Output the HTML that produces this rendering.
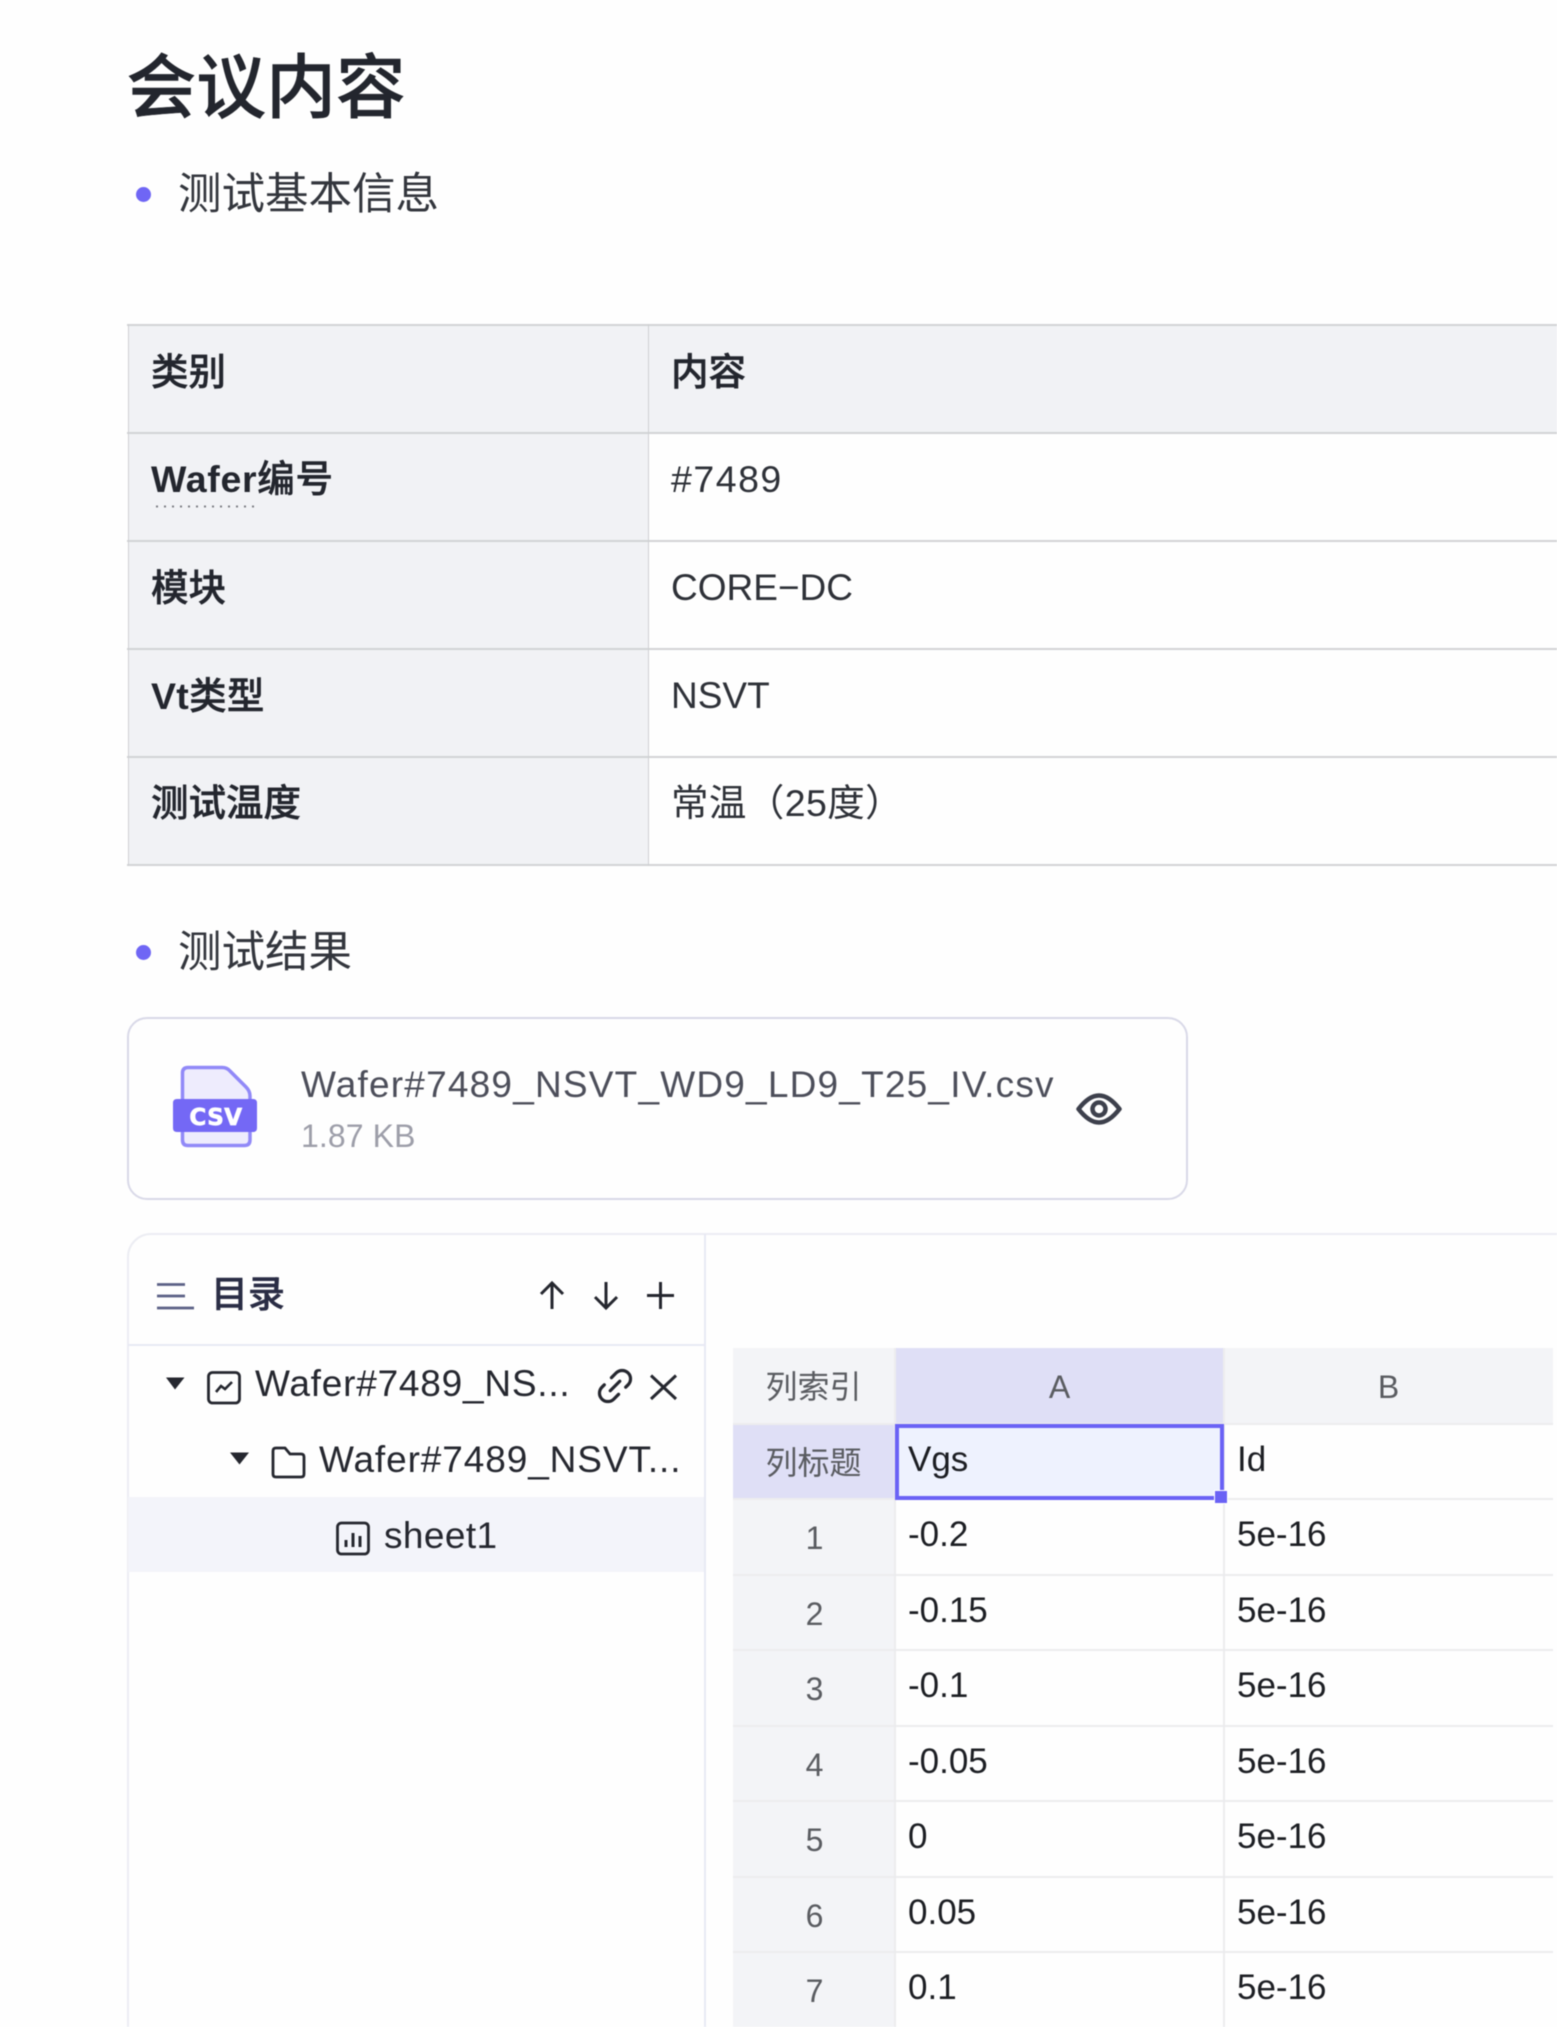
<!DOCTYPE html>
<html lang="zh"><head><meta charset="utf-8"><title>会议内容</title>
<style>
html,body{margin:0;padding:0;background:#fefefe}
#p{position:relative;width:1557px;height:2027px;overflow:hidden;background:#fefefe;font-family:"Liberation Sans","Noto Sans CJK SC",sans-serif;color:#23262e;filter:blur(.4px)}
.t{position:absolute;white-space:nowrap;line-height:50px;height:50px}
.b{font-weight:500;-webkit-text-stroke:.45px currentColor}
.l{font-weight:700;-webkit-text-stroke:0}
.r{position:absolute}
.cell{font-size:35px;color:#1c1e23}
.idx{font-size:32px;color:#5a5c61;text-align:center}
svg{position:absolute;overflow:visible}
</style></head><body><div id="p">

<div class="t" style="left:126.500px;top:53px;font-size:69.800px;line-height:70px;height:70px;font-weight:500;-webkit-text-stroke:.5px currentColor">会议内容</div>

<div class="r" style="left:136px;top:187px;width:15px;height:15px;border-radius:50%;background:#6f66f5"></div>
<div class="t" style="left:178px;top:170px;font-size:43.500px;color:#33363d">测试基本信息</div>

<!-- table -->
<div class="r" style="left:128px;top:324px;width:520px;height:541px;background:#f1f2f5"></div>
<div class="r" style="left:648px;top:324px;width:909px;height:108px;background:#f1f2f5"></div>
<div class="r" style="left:127px;top:324px;width:1430px;height:2px;background:#d2d3d5"></div>
<div class="r" style="left:127px;top:432px;width:1430px;height:2px;background:#d2d3d5"></div>
<div class="r" style="left:127px;top:540px;width:1430px;height:2px;background:#d2d3d5"></div>
<div class="r" style="left:127px;top:648px;width:1430px;height:2px;background:#d2d3d5"></div>
<div class="r" style="left:127px;top:756px;width:1430px;height:2px;background:#d2d3d5"></div>
<div class="r" style="left:127px;top:864px;width:1430px;height:2px;background:#d2d3d5"></div>
<div class="r" style="left:127.500px;top:324px;width:1.500px;height:542px;background:#cfd0d3"></div>
<div class="r" style="left:647.500px;top:324px;width:1.500px;height:542px;background:#cfd0d3"></div>

<div class="t b" style="left:151px;top:347px;font-size:37.500px">类别</div>
<div class="t b" style="left:671px;top:347px;font-size:37.500px">内容</div>
<div class="t b" style="left:151px;top:454px;font-size:37.500px;letter-spacing:.7px"><span class="l">Wafer</span>编号</div>
<svg style="left:0;top:0" width="1557" height="2027"><line x1="156" y1="506.500" x2="255" y2="506.500" stroke="#7d7f84" stroke-width="2" stroke-dasharray="2 6"/></svg>
<div class="t" style="left:671px;top:453.500px;font-size:37.500px;letter-spacing:1.500px;color:#2e3138">#7489</div>
<div class="t b" style="left:151px;top:562.500px;font-size:37.500px">模块</div>
<div class="t" style="left:671px;top:562.500px;font-size:37px;letter-spacing:0;color:#2e3138">CORE−DC</div>
<div class="t b" style="left:151px;top:670.500px;font-size:37.500px;letter-spacing:.3px"><span class="l">Vt</span>类型</div>
<div class="t" style="left:671px;top:670.500px;font-size:37px;letter-spacing:0;color:#2e3138">NSVT</div>
<div class="t b" style="left:151px;top:778px;font-size:37.500px">测试温度</div>
<div class="t" style="left:671px;top:778px;font-size:37.500px;letter-spacing:.4px;color:#2e3138">常温（25度）</div>

<div class="r" style="left:136px;top:945px;width:15px;height:15px;border-radius:50%;background:#6f66f5"></div>
<div class="t" style="left:178px;top:928px;font-size:43.500px;color:#33363d">测试结果</div>

<!-- file card -->
<div class="r" style="left:127px;top:1017px;width:1061px;height:183px;box-sizing:border-box;border:2.500px solid #d9d9e8;border-radius:20px"></div>
<svg style="left:0;top:0" width="1557" height="2027">
  <path d="M188 1067.500 H222 Q227 1067.500 230 1071 L246 1087 Q250 1091 250 1096 V1140 Q250 1145.500 244 1145.500 H188 Q182.500 1145.500 182.500 1140 V1073 Q182.500 1067.500 188 1067.500 Z" fill="#eeecfd" stroke="#9189f8" stroke-width="3.500"/>
  <path d="M177 1099 H253 Q257 1099 257 1103 V1128 Q257 1132 253 1132 H177 Q173 1132 173 1128 V1103 Q173 1099 177 1099 Z" fill="#7468f5"/>
  <text x="216" y="1125" text-anchor="middle" font-family="DejaVu Sans" font-weight="700" font-size="23" letter-spacing=".5" fill="#fff" stroke="#fff" stroke-width=".7">CSV</text>
</svg>
<div class="t" style="left:301px;top:1060px;font-size:37px;letter-spacing:1.200px;color:#4c4e5a">Wafer#7489_NSVT_WD9_LD9_T25_IV.csv</div>
<div class="t" style="left:301px;top:1111px;font-size:32px;letter-spacing:.1px;color:#9d9ea9">1.87 KB</div>
<svg style="left:0;top:0" width="1557" height="2027" fill="none" stroke="#3d404c" stroke-width="4.500">
  <path d="M1078.500 1109 Q1089 1095.500 1099 1095.500 Q1109 1095.500 1119.500 1109 Q1109 1122.500 1099 1122.500 Q1089 1122.500 1078.500 1109 Z" stroke-linejoin="round"/>
  <circle cx="1099" cy="1109" r="6.500"/>
</svg>

<!-- catalog panel -->
<div class="r" style="left:127px;top:1233px;width:1500px;height:860px;box-sizing:border-box;border:2px solid #ecedf3;border-radius:24px"></div>
<div class="r" style="left:704px;top:1234px;width:2px;height:793px;background:#e8e9f4"></div>
<div class="r" style="left:128px;top:1344px;width:576px;height:2px;background:#e8e9f4"></div>
<svg style="left:0;top:0" width="1557" height="2027" fill="none">
  <path d="M157 1284.500 H185 M157 1296 H185 M157 1308 H194" stroke="#5c6186" stroke-width="2.800"/>
  <path d="M552 1309 V1283 M541 1294 L552 1283 L563 1294" stroke="#25272f" stroke-width="3"/>
  <path d="M606 1282 V1308 M595 1297 L606 1308 L617 1297" stroke="#25272f" stroke-width="3"/>
  <path d="M647 1295.500 H674 M660.500 1282 V1309" stroke="#25272f" stroke-width="3"/>
</svg>
<div class="t b" style="left:211px;top:1270px;font-size:37px;color:#2a2d45">目录</div>

<div class="r" style="left:128px;top:1497px;width:576px;height:75px;background:#f3f4fa"></div>

<svg style="left:0;top:0" width="1557" height="2027" fill="none" stroke="#25272f" stroke-width="2.800">
  <path d="M166 1377.500 H184.500 L175 1389.500 Z" fill="#25272f" stroke="none"/>
  <rect x="208.500" y="1372.500" width="31" height="30.500" rx="4"/>
  <path d="M216 1392 L221 1386 L225 1389 L232 1382" stroke-width="2.600"/>
  <path d="M230 1452.500 H249 L239.500 1464.500 Z" fill="#25272f" stroke="none"/>
  <path d="M273 1451 Q273 1448 276 1448 H285 L290 1454 H301 Q304 1454 304 1457 V1474 Q304 1477 301 1477 H276 Q273 1477 273 1474 Z"/>
  <rect x="337.500" y="1523" width="31" height="31" rx="4"/>
  <path d="M346 1547 V1540 M353 1547 V1533 M360 1547 V1536" stroke-width="3"/>
  <g transform="translate(615 1386) rotate(-45) scale(.84)" stroke-width="3.800" stroke-linecap="round">
    <path d="M4 -10 H12 a10 10 0 0 1 0 20 H8"/>
    <path d="M-4 10 H-12 a10 10 0 0 1 0 -20 H-8"/>
    <path d="M-8 0 H8"/>
  </g>
  <path d="M651 1375.500 L676 1399 M676 1375.500 L651 1399" stroke-width="3"/>
</svg>
<div class="t" style="left:255px;top:1359px;font-size:37px;letter-spacing:.78px;color:#25272f">Wafer#7489_NS...</div>
<div class="t" style="left:319px;top:1435px;font-size:37px;letter-spacing:.9px;color:#25272f">Wafer#7489_NSVT...</div>
<div class="t" style="left:384px;top:1511px;font-size:37px;letter-spacing:.4px;color:#25272f">sheet1</div>

<!-- sheet -->
<div class="r" style="left:733px;top:1348px;width:162px;height:679px;background:#f3f4f7"></div>
<div class="r" style="left:895px;top:1348px;width:329px;height:75px;background:#dfdff6"></div>
<div class="r" style="left:1224px;top:1348px;width:329px;height:75px;background:#f3f4f7"></div>
<div class="r" style="left:733px;top:1423px;width:162px;height:76px;background:#dfdff6"></div>
<div class="r" style="left:733px;top:1423px;width:820px;height:2px;background:#ececee"></div>
<div class="r" style="left:733px;top:1498px;width:820px;height:2px;background:#ececee"></div>
<div class="r" style="left:733px;top:1574px;width:820px;height:2px;background:#ececee"></div>
<div class="r" style="left:733px;top:1649px;width:820px;height:2px;background:#ececee"></div>
<div class="r" style="left:733px;top:1725px;width:820px;height:2px;background:#ececee"></div>
<div class="r" style="left:733px;top:1800px;width:820px;height:2px;background:#ececee"></div>
<div class="r" style="left:733px;top:1876px;width:820px;height:2px;background:#ececee"></div>
<div class="r" style="left:733px;top:1951px;width:820px;height:2px;background:#ececee"></div>
<div class="r" style="left:894px;top:1348px;width:2px;height:679px;background:#ececee"></div>
<div class="r" style="left:1223px;top:1348px;width:2px;height:679px;background:#ececee"></div>
<div class="r" style="left:895px;top:1424px;width:329px;height:76px;box-sizing:border-box;border:4.500px solid #6a62f5;background:#eef2fe"></div>
<div class="r" style="left:1214px;top:1490px;width:12px;height:12px;background:#6a62f5;border:1px solid #fff"></div>

<div class="t idx" style="left:733px;top:1362px;width:161px">列索引</div>
<div class="t idx" style="left:895px;top:1362px;width:329px">A</div>
<div class="t idx" style="left:1224px;top:1362px;width:329px">B</div>
<div class="t idx" style="left:733px;top:1438px;width:161px">列标题</div>
<div class="t idx" style="left:734px;top:1513px;width:161px">1</div>
<div class="t idx" style="left:734px;top:1589px;width:161px">2</div>
<div class="t idx" style="left:734px;top:1664px;width:161px">3</div>
<div class="t idx" style="left:734px;top:1740px;width:161px">4</div>
<div class="t idx" style="left:734px;top:1815px;width:161px">5</div>
<div class="t idx" style="left:734px;top:1891px;width:161px">6</div>
<div class="t idx" style="left:734px;top:1966px;width:161px">7</div>

<div class="t cell" style="left:908px;top:1435px">Vgs</div><div class="t cell" style="left:1237px;top:1435px">Id</div>
<div class="t cell" style="left:908px;top:1510px">-0.2</div><div class="t cell" style="left:1237px;top:1510px">5e-16</div>
<div class="t cell" style="left:908px;top:1586px">-0.15</div><div class="t cell" style="left:1237px;top:1586px">5e-16</div>
<div class="t cell" style="left:908px;top:1661px">-0.1</div><div class="t cell" style="left:1237px;top:1661px">5e-16</div>
<div class="t cell" style="left:908px;top:1737px">-0.05</div><div class="t cell" style="left:1237px;top:1737px">5e-16</div>
<div class="t cell" style="left:908px;top:1812px">0</div><div class="t cell" style="left:1237px;top:1812px">5e-16</div>
<div class="t cell" style="left:908px;top:1888px">0.05</div><div class="t cell" style="left:1237px;top:1888px">5e-16</div>
<div class="t cell" style="left:908px;top:1963px">0.1</div><div class="t cell" style="left:1237px;top:1963px">5e-16</div>

</div></body></html>
